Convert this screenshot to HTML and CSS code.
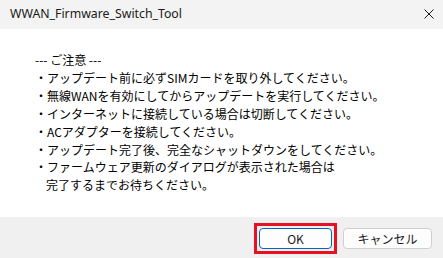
FILE: index.html
```html
<!DOCTYPE html>
<html>
<head>
    <meta charset="utf-8">
    <title>WWAN_Firmware_Switch_Tool</title>
    <link rel="stylesheet" href="styles.css">
</head>
<body>
    <div class="dialog">
        <div class="titlebar">
            <span class="title">WWAN_Firmware_Switch_Tool</span>
            <svg class="close" width="10" height="10" viewBox="0 0 10 10">
                <path d="M0.5 0.5L9.5 9.5M9.5 0.5L0.5 9.5" stroke="#1a1a1a" stroke-width="1" fill="none"/>
            </svg>
        </div>
        <div class="content">
            <p class="note">--- ご注意 ---</p>
            <p>・アップデート前に必ずSIMカードを取り外してください。</p>
            <p>・無線WANを有効にしてからアップデートを実行してください。</p>
            <p>・インターネットに接続している場合は切断してください。</p>
            <p>・ACアダプターを接続してください。</p>
            <p>・アップデート完了後、完全なシャットダウンをしてください。</p>
            <p>・ファームウェア更新のダイアログが表示された場合は</p>
            <p class="indent">完了するまでお待ちください。</p>
        </div>
        <div class="footer">
            <span class="mark"><button class="btn btn-ok">OK</button></span>
            <button class="btn btn-cancel">キャンセル</button>
        </div>
    </div>
</body>
</html>
```

FILE: styles.css
```css
*{
    margin: 0;
    padding: 0;
    box-sizing: border-box;
}

body
{
    width: 443px;
    height: 258px;
    font-family: "Noto Sans CJK JP", "Noto Sans", sans-serif;
    font-size: 12px;
    color: #000;
    overflow: hidden;
}

.dialog
{
    display: flex;
    flex-direction: column;
    height: 258px;
}

.titlebar
{
    height: 29px;
    background-color: #f3f3f3;
    display: flex;
    align-items: center;
    justify-content: space-between;
    padding: 0 9px 2px 10px;
}

.title
{
    font-family: "Noto Sans", sans-serif;
    font-size: 12.3px;
    color: #1a1a1a;
}

.content
{
    flex: 1;
    background-color: #ffffff;
    padding: 22px 0 0 35px;
}

.content p
{
    line-height: 17.9px;
    white-space: nowrap;
}

.content .indent
{
    padding-left: 11px;
}

.footer
{
    height: 41px;
    background-color: #f0f0f0;
    display: flex;
    justify-content: flex-end;
    align-items: flex-start;
    gap: 6px;
    padding: 6px 11px 0 0;
}

/* red highlight box round the OK button */
.mark
{
    display: flex;
    border: 3px solid #e81123;
    padding: 2px;
}

.btn
{
    height: 21px;
    background-color: #fdfdfd;
    border: 1px solid #d0d0d0;
    border-radius: 4px;
    font-family: "Noto Sans CJK JP", "Noto Sans", sans-serif;
    font-size: 12px;
    color: #1a1a1a;
    line-height: 19px;
}

.btn-ok
{
    width: 73px;
    border-color: #0067c0;
}

.btn-cancel
{
    width: 89px;
    margin-top: 5px;
}
```
